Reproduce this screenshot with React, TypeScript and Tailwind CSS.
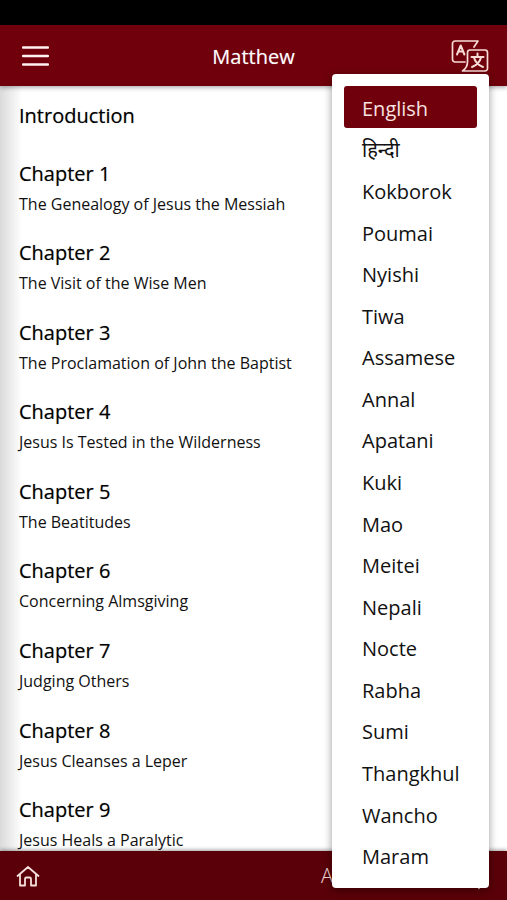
const chapters = [
  'The Genealogy of Jesus the Messiah',
  'The Visit of the Wise Men',
  'The Proclamation of John the Baptist',
  'Jesus Is Tested in the Wilderness',
  'The Beatitudes',
  'Concerning Almsgiving',
  'Judging Others',
  'Jesus Cleanses a Leper',
  'Jesus Heals a Paralytic',
];

const languages = [
  'English', 'हिन्दी', 'Kokborok', 'Poumai', 'Nyishi', 'Tiwa', 'Assamese', 'Annal', 'Apatani', 'Kuki',
  'Mao', 'Meitei', 'Nepali', 'Nocte', 'Rabha', 'Sumi', 'Thangkhul', 'Wancho', 'Maram',
];

function TranslateIcon() {
  return (
    <svg width="38" height="32" viewBox="0 0 38 32" fill="none" stroke="#f8dcd8" strokeWidth="1.7" strokeLinecap="round" strokeLinejoin="round">
      <path d="M14 22H4a2.500 2.500 0 0 1-2.500-2.500V3.500A2.500 2.500 0 0 1 4 1h23l-4 6" />
      <path d="M19 10h15a2.500 2.500 0 0 1 2.500 2.500v16A2.500 2.500 0 0 1 34 31H11.500c3-2 5-5 5-9v-9.500A2.500 2.500 0 0 1 19 10z" />
      <path d="M6 14.500L9.700 5.500l3.700 9M7.300 11.500h4.800" strokeWidth="2" />
      <path d="M26.500 13.500v3M20.500 17h12M30 17.500c-1 4-4 7.500-9 9.500M23 17.500c1 4 4 7.500 9 9.500" strokeWidth="2" />
    </svg>
  );
}

export default function App() {
  return (
    <div className="relative flex h-screen flex-col overflow-hidden bg-white font-['Open_Sans','Noto_Sans',sans-serif] text-[#111]">
      <div className="h-[25px] shrink-0 bg-black" />
      <header className="relative z-10 flex h-[61px] shrink-0 items-center justify-between bg-[#70000b] pr-[18px] pl-[22px] text-white shadow-[0_1px_5px_rgba(0,0,0,0.4)]">
        <button aria-label="Open menu" className="flex w-[34px]">
          <svg width="27" height="22" viewBox="0 0 27 22" stroke="#fff1ef" strokeWidth="2.500" strokeLinecap="round">
            <path d="M1 2.500h25M1 11h25M1 19.500h25" />
          </svg>
        </button>
        <h1 className="pt-0.5 text-xl font-medium [text-shadow:0_0_1px_rgba(255,255,255,0.4)]">Matthew</h1>
        <button aria-label="Change language">
          <TranslateIcon />
        </button>
      </header>

      <main className="flex min-h-0 flex-1 flex-col bg-linear-to-r from-[#dadada] to-white to-[22px] pb-px pl-[19px]">
        <a href="#introduction" className="flex h-12 shrink-0 items-end pb-1.5 text-xl leading-6 font-medium text-black [text-shadow:0_0_1px_rgba(0,0,0,0.4)]">Introduction</a>
        <ul className="flex min-h-0 flex-1 flex-col">
          {chapters.map((title, i) => (
            <li key={title} className="flex flex-1 flex-col justify-end">
              <a href={`#chapter-${i + 1}`} className="flex flex-col gap-2">
                <span className="text-xl leading-6 font-medium text-black [text-shadow:0_0_1px_rgba(0,0,0,0.4)]">Chapter {i + 1}</span>
                <span className="text-base leading-5">{title}</span>
              </a>
            </li>
          ))}
        </ul>
      </main>

      <footer className="relative flex h-[49px] shrink-0 items-center justify-between bg-[#5a0008] pr-[18px] pl-4 text-[#f3d8d5] shadow-[0_-1px_4px_rgba(0,0,0,0.4)]">
        <button aria-label="Home">
          <svg width="24" height="22" viewBox="0 0 24 22" fill="none" stroke="#f6dfdc" strokeWidth="1.800" strokeLinejoin="round" strokeLinecap="round">
            <path d="M1.500 11L12 2l10.500 9M4 9.500v11h5v-6.500a1.500 1.500 0 0 1 1.500-1.500h3a1.500 1.500 0 0 1 1.500 1.500v6.500h5v-11" />
          </svg>
        </button>
        <div className="flex w-[168px] items-center justify-between">
          <button aria-label="Text size" className="text-xl font-light">A</button>
          <button aria-label="Search" className="pr-1">
            <svg width="20" height="28" viewBox="0 0 20 28" fill="none" stroke="#f3d8d5" strokeWidth="1.600" strokeLinecap="round">
              <circle cx="8" cy="13" r="6" />
              <path d="M11 18l3 8.500" />
            </svg>
          </button>
        </div>
      </footer>

      <nav aria-label="Languages" className="absolute top-[74px] right-[18px] bottom-3 z-20 flex w-[157px] flex-col rounded-[4px] bg-white p-3 text-xl shadow-[0_2px_9px_rgba(0,0,0,0.4)]">
        {languages.map((language) => (
          <button
            key={language}
            lang={language === 'हिन्दी' ? 'hi' : 'en'}
            aria-current={language === 'English' ? 'true' : undefined}
            className="flex min-h-0 flex-1 items-center rounded-[3px] pt-1 pl-[18px] text-left leading-7 aria-[current=true]:bg-[#70000b] aria-[current=true]:text-[#f8e3e0]"
          >
            {language}
          </button>
        ))}
      </nav>
    </div>
  );
}
